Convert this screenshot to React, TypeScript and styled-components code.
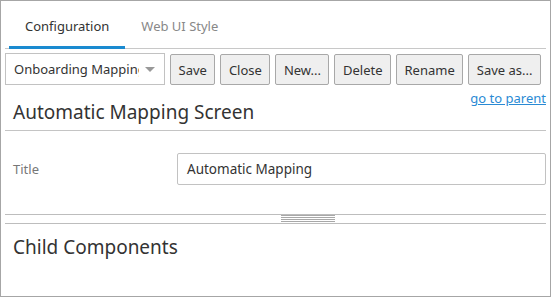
import styled, { createGlobalStyle } from 'styled-components';

const GlobalStyle = createGlobalStyle`
  html, body {
    margin: 0;
    padding: 0;
    background: #fff;
  }
  body {
    font-family: "Noto Sans", "Open Sans", sans-serif;
    color: #333;
  }
`;

const Frame = styled.div`
  box-sizing: border-box;
  width: 551px;
  height: 297px;
  border: 1px solid #a6a6a6;
  padding: 0 4px;
  display: flex;
  flex-direction: column;
  overflow: hidden;
`;

const TabBar = styled.div`
  display: flex;
  height: 47px;
  padding-left: 4px;
  border-bottom: 1px solid #c8c8c8;
`;

const Tab = styled.div<{ $active?: boolean }>`
  display: flex;
  align-items: center;
  padding: 4px 16px 0;
  margin-bottom: -1px;
  font-size: 13px;
  color: ${(p) => (p.$active ? '#333' : '#888')};
  border-bottom: 3px solid ${(p) => (p.$active ? '#1a8ad0' : 'transparent')};
`;

const Toolbar = styled.div`
  display: flex;
  align-items: flex-start;
  gap: 5px;
  margin-top: 4px;
`;

const Select = styled.div`
  box-sizing: border-box;
  width: 160px;
  height: 32px;
  border: 1px solid #c2c2c2;
  display: flex;
  align-items: center;
  padding: 0 8px;
  gap: 6px;
  font-size: 13px;
  color: #333;
`;

const SelectText = styled.span`
  flex: 1;
  white-space: nowrap;
  overflow: hidden;
`;

const Caret = styled.span`
  width: 0;
  height: 0;
  border-left: 5px solid transparent;
  border-right: 5px solid transparent;
  border-top: 5px solid #999;
  margin-right: 1px;
`;

const Button = styled.button`
  box-sizing: border-box;
  height: 31px;
  margin-top: 1px;
  padding: 0 7.5px;
  background: #efefef;
  border: 1px solid #a8a8a8;
  border-radius: 2px;
  font-family: inherit;
  font-size: 13px;
  color: #333;
`;

const Header = styled.div`
  display: flex;
  flex-direction: column;
  padding: 5px 0 6px 8px;
  border-bottom: 1px solid #c4c4c4;
`;

const ParentLink = styled.a`
  align-self: flex-end;
  font-size: 13px;
  line-height: 16px;
  color: #2a8ad4;
  text-decoration: underline;
`;

const Heading = styled.h2`
  margin: -6px 0 0;
  font-size: 19px;
  font-weight: 400;
  line-height: 24px;
  color: #333;
`;

const FieldRow = styled.div`
  display: flex;
  align-items: flex-start;
  padding: 22px 0 0 8px;
  height: 62px;
  box-sizing: border-box;
`;

const Label = styled.label`
  width: 164px;
  line-height: 32px;
  font-size: 13px;
  color: #777;
`;

const Input = styled.div`
  box-sizing: border-box;
  flex: 1;
  height: 32px;
  border: 1px solid #c2c2c2;
  border-radius: 2px;
  padding: 0 9px;
  display: flex;
  align-items: center;
  font-size: 13.5px;
  color: #333;
`;

const Splitter = styled.div`
  margin-top: 21px;
  height: 8px;
  border-top: 1px solid #bdbdbd;
  border-bottom: 1px solid #bdbdbd;
`;

const Grip = styled.div`
  margin-left: 276px;
  width: 54px;
  height: 8px;
  background: repeating-linear-gradient(
    to bottom,
    #a8a8a8 0,
    #a8a8a8 1px,
    transparent 1px,
    transparent 2px
  );
`;

const Section = styled.h2`
  margin: 11px 0 0 8px;
  font-size: 19px;
  font-weight: 400;
  line-height: 24px;
  color: #333;
`;

export default function App() {
  return (
    <>
      <GlobalStyle />
      <Frame>
        <TabBar>
          <Tab $active>Configuration</Tab>
          <Tab>Web UI Style</Tab>
        </TabBar>
        <Toolbar>
          <Select>
            <SelectText>Onboarding Mapping</SelectText>
            <Caret />
          </Select>
          <Button>Save</Button>
          <Button>Close</Button>
          <Button>New...</Button>
          <Button>Delete</Button>
          <Button>Rename</Button>
          <Button>Save as...</Button>
        </Toolbar>
        <Header>
          <ParentLink href="#">go to parent</ParentLink>
          <Heading>Automatic Mapping Screen</Heading>
        </Header>
        <FieldRow>
          <Label>Title</Label>
          <Input>Automatic Mapping</Input>
        </FieldRow>
        <Splitter>
          <Grip />
        </Splitter>
        <Section>Child Components</Section>
      </Frame>
    </>
  );
}
